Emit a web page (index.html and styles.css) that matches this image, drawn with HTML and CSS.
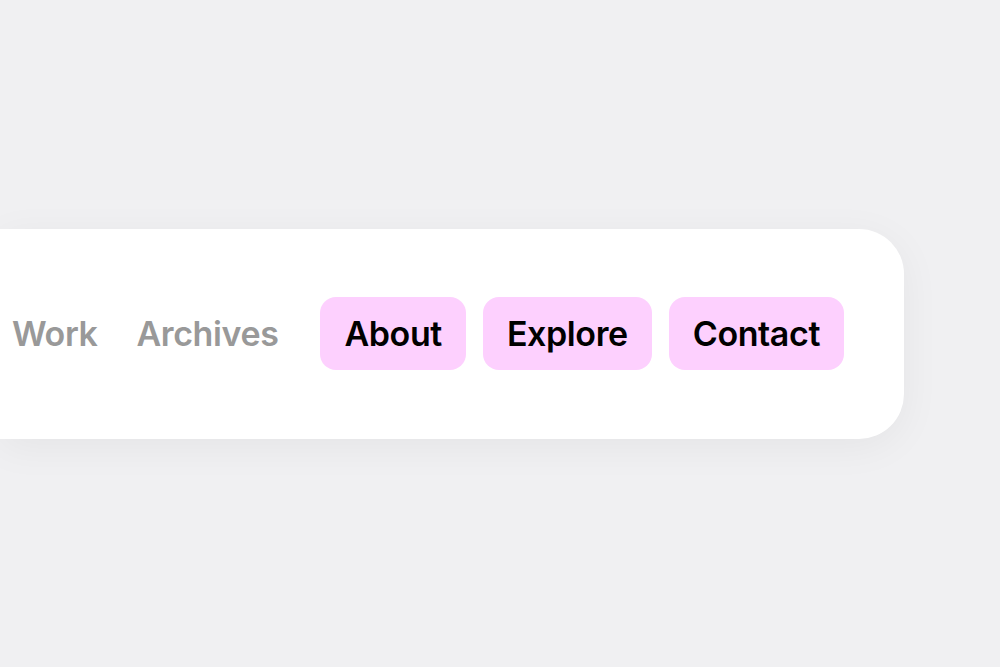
FILE: index.html
```html
<!DOCTYPE html>
<html lang="en">
<head>
    <meta charset="UTF-8">
    <meta name="viewport" content="width=device-width, initial-scale=1.0">
    <title>Menu</title>
    <link rel="stylesheet" href="styles.css">
</head>
<body>
    <div class="card">
        <nav class="menu">
            <a class="link" href="#">Work</a>
            <a class="link link-last" href="#">Archives</a>
            <a class="pill" href="#">About</a>
            <a class="pill" href="#">Explore</a>
            <a class="pill" href="#">Contact</a>
        </nav>
    </div>
</body>
</html>
```

FILE: styles.css
```css
body {
    margin: 0;
    height: 100vh;
    background-color: #f0f0f2;
    font-family: Inter, "Liberation Sans", Arial, sans-serif;
    display: flex;
    align-items: center;
    overflow: hidden;
}
.card {
    width: 904px;
    height: 210px;
    background-color: #ffffff;
    border-radius: 0 45px 45px 0;
    box-shadow: 0 8px 40px rgba(0, 0, 0, 0.05);
    display: flex;
    align-items: center;
    justify-content: flex-end;
    padding-right: 60px;
    box-sizing: border-box;
}
.menu {
    display: flex;
    align-items: center;
    gap: 17px;
}
.menu a {
    font-size: 34px;
    font-weight: 600;
    letter-spacing: -0.4px;
    text-decoration: none;
    line-height: 41px;
}
.link {
    color: #999999;
    margin-right: 22px;
}
.link-last {
    margin-right: 25px;
}
.pill {
    color: #000000;
    background-color: #fdd0fe;
    padding: 16px 24px;
    border-radius: 16px;
}
```
